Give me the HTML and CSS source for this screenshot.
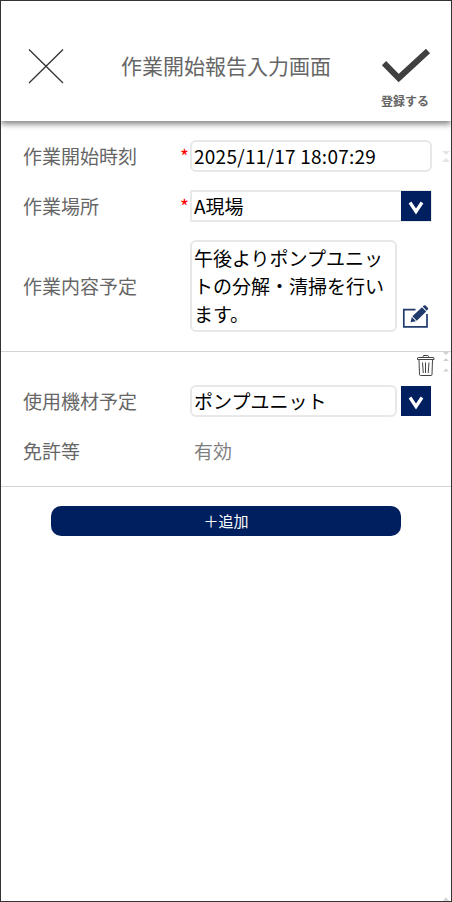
FILE: index.html
```
<!DOCTYPE html>
<html lang="ja">
<head>
<meta charset="utf-8">
<title>作業開始報告入力画面</title>
<link rel="stylesheet" href="styles.css">
</head>
<body>
<div class="screen">
  <header class="header">
    <svg class="close" width="36" height="36" viewBox="0 0 36 36"><path d="M1 1.5L35 35M35 1.5L1 35" stroke="#333" stroke-width="1.3" fill="none"/></svg>
    <h1 class="title">作業開始報告入力画面</h1>
    <div class="submit">
      <svg width="50" height="36" viewBox="0 0 50 36"><path d="M3 16.2L17.7 31L47 4" stroke="#404040" stroke-width="6" fill="none"/></svg>
      <span class="submit-label">登録する</span>
    </div>
  </header>
  <main>
    <section class="section main-info">
      <div class="row">
        <span class="label">作業開始時刻</span><span class="req">*</span>
        <div class="field wide time">2025/11/17 18:07:29</div>
      </div>
      <div class="row">
        <span class="label">作業場所</span><span class="req">*</span>
        <div class="field wide select">A現場<span class="drop"><svg width="30" height="30" viewBox="0 0 30 30"><path d="M9 11.5L15 20.5L21 11.5" stroke="#fff" stroke-width="3.2" fill="none"/></svg></span></div>
      </div>
      <div class="row">
        <span class="label">作業内容予定</span><span class="req"></span>
        <div class="field area">午後よりポンプユニットの分解・清掃を行います。</div>
        <svg class="edit" width="28" height="24" viewBox="0 0 28 24"><path d="M13.5 4.7H1.8V21.8H25V9" stroke="#203a6b" stroke-width="1.7" fill="none"/><path d="M8.5 17.3L9.8 12L14 16.2ZM10.4 11.3L20 2.2L24.2 6.4L14.8 15.7ZM20.7 1.5L21.8 .5Q22.8 -.1 23.6 .5L26 2.9Q26.4 3.7 25.8 4.6L24.8 5.7Z" fill="#203a6b"/></svg>
      </div>
    </section>
    <section class="section equipment">
      <div class="tools">
        <svg width="18" height="22" viewBox="0 0 18 22"><path d="M.5 4.5V3Q.5 2.5 1.5 2.5H16Q17 2.5 17 3V4.5ZM6 2.5V1.5Q6 .5 7 .5H10.5Q11.5 .5 11.5 1.5V2.5M2 5L2.5 19.5Q2.5 20.5 3.5 20.5H14Q15 20.5 15 19.5L15.5 5M5.5 7.5L6.3 18M8.5 7.5V18M12 7.5L11.2 18" stroke="#444" stroke-width="1" fill="none"/></svg>
      </div>
      <div class="row">
        <span class="label">使用機材予定</span><span class="req"></span>
        <div class="field mid">ポンプユニット</div>
        <span class="drop"><svg width="30" height="30" viewBox="0 0 30 30"><path d="M9 11.5L15 20.5L21 11.5" stroke="#fff" stroke-width="3.2" fill="none"/></svg></span>
      </div>
      <div class="row">
        <span class="label">免許等</span><span class="req"></span>
        <div class="value">有効</div>
      </div>
    </section>
    <button class="add" type="button">＋追加</button>
  </main>
  <svg class="mark mark-time" width="8" height="11" viewBox="0 0 8 11"><path d="M0 0H8L4 4ZM0 11H8L4 7Z" fill="#e4e4e4"/></svg>
  <svg class="mark mark-item" width="8" height="20" viewBox="0 0 8 20"><path d="M1 0H7L4 3ZM1 9H7L4 6ZM1 19.5H7L4 16.5Z" fill="#d0d0d0"/></svg>
  <svg class="mark mark-end" width="6" height="4" viewBox="0 0 6 4"><path d="M0 4H6L3 0Z" fill="#d8d8d8"/></svg>
</div>
</body>
</html>
```
FILE: styles.css
```
* { box-sizing: border-box; }
body {
  margin: 0;
  background: #fff;
  font-family: "Noto Sans CJK JP", sans-serif;
  color: #666;
}
.screen {
  position: relative;
  width: 452px;
  height: 902px;
  border: 1px solid #333;
  overflow: hidden;
}
.header {
  display: flex;
  align-items: flex-start;
  height: 120px;
  padding: 47px 20px 0 27px;
  box-shadow: 0 3px 6px 0 rgba(0, 0, 0, .5);
}
.close { flex: none; }
.title {
  flex: 1;
  margin: 2px 0 0 57px;
  font-size: 21px;
  line-height: 30px;
  font-weight: 400;
  white-space: nowrap;
}
.submit {
  display: flex;
  flex-direction: column;
  align-items: center;
  width: 50px;
}
.submit svg { flex: none; margin-top: -1px; }
.submit-label {
  margin: 9px 2px 0 0;
  font-size: 12px;
  line-height: 18px;
  font-weight: 700;
  white-space: nowrap;
}
.section {
  display: flex;
  flex-direction: column;
  padding-left: 22px;
  border-bottom: 1px solid #d3d3d3;
}
.main-info {
  gap: 18px;
  height: 231px;
  padding-top: 19px;
}
.equipment { height: 135px; }
.row {
  display: flex;
  align-items: center;
  font-size: 19px;
  line-height: 28px;
}
.label { width: 156px; }
.req {
  width: 11px;
  height: 28px;
  color: #f00;
  text-align: center;
}
.field {
  height: 32px;
  padding: 0 2px;
  border: 2px solid #e8e8e8;
  border-radius: 6px;
  color: #000;
}
.wide { width: 242px; }
.time { letter-spacing: .25px; }
.mid { width: 207px; margin-right: 4px; }
.area {
  width: 207px;
  height: 92px;
  padding-top: 2px;
}
.select {
  display: flex;
  justify-content: space-between;
  padding-right: 0;
  border-radius: 1px;
}
.drop {
  flex: none;
  width: 30px;
  height: 30px;
  background: #001f5f;
}
.select .drop { margin: -1px -1px 0 0; }
.drop svg { display: block; }
.edit {
  align-self: flex-end;
  margin: 0 0 3px 5px;
}
.tools {
  display: flex;
  justify-content: flex-end;
  height: 33px;
  padding: 3px 16px 0 0;
}
.value { padding-left: 4px; color: #7f7f7f; }
.equipment .row + .row { margin-top: 20px; }
.add {
  display: block;
  width: 350px;
  height: 30px;
  margin: 19px auto 0;
  padding: 0;
  border: 0;
  border-radius: 10px;
  background: #001f5f;
  color: #fff;
  font: 400 15px/30px "Noto Sans CJK JP", sans-serif;
}
.mark { position: absolute; }
.mark-time { right: 1px; top: 150px; }
.mark-item { right: 1px; top: 351px; }
.mark-end { right: 2px; bottom: 0; }
```
